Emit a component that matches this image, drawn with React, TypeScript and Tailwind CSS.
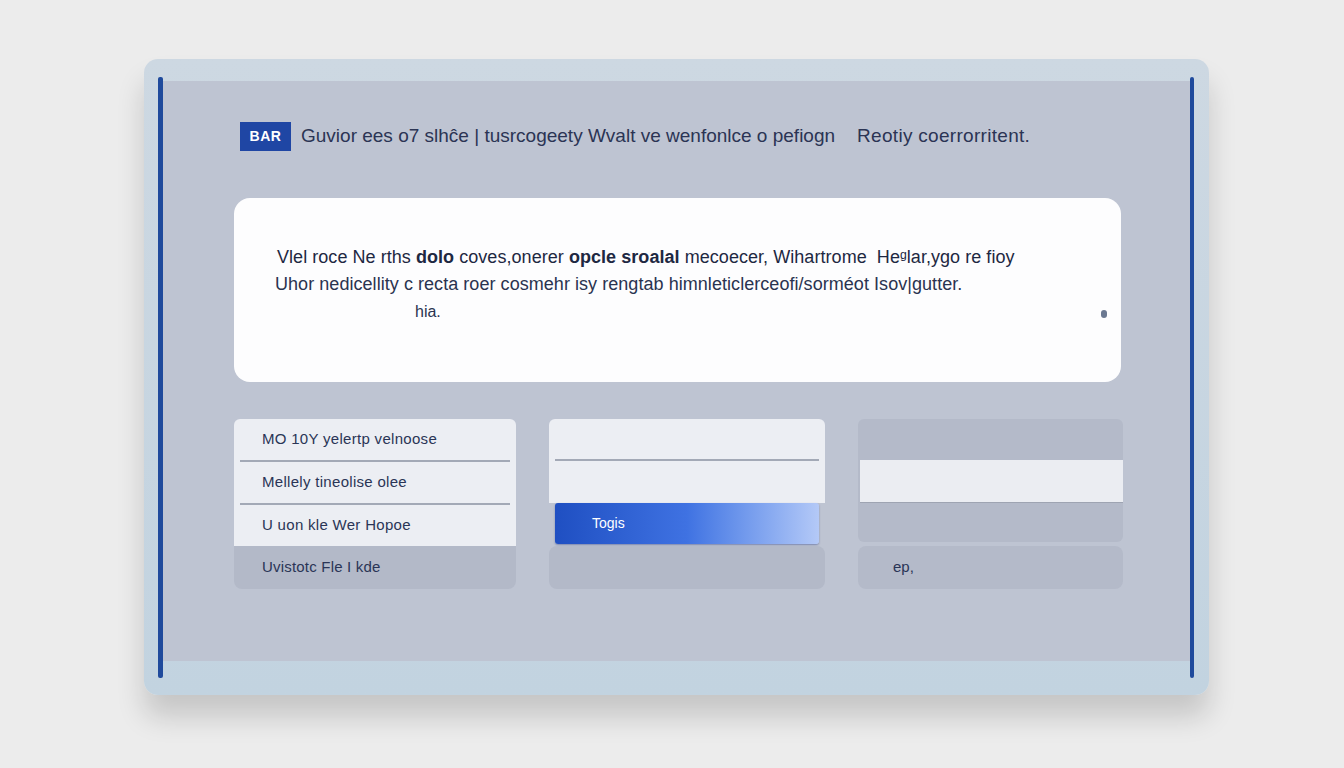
import React from "react";

const font = { fontFamily: '"Liberation Sans", Arial, sans-serif' };

function ListCard() {
  const rows = [
    "MO 10Y yelertp velnoose",
    "Mellely tineolise olee",
    "U uon kle Wer Hopoe",
  ];
  return (
    <div className="flex flex-col w-[282px]">
      <div className="flex flex-col bg-[#eceef3] rounded-t-[6px]">
        {rows.map((r, i) => (
          <div key={r} className="flex flex-col">
            {i > 0 && <div className="mx-[6px] h-[2px] bg-[#a3a9b6]" />}
            <div className="h-[41px] flex items-center pl-[28px] text-[15px] tracking-[0.3px] text-[#2a3556]">
              {r}
            </div>
          </div>
        ))}
      </div>
      <div className="h-[43px] flex items-center pl-[28px] text-[15px] tracking-[0.2px] text-[#2a3556] bg-[#b3b9c8] rounded-b-[8px]">
        Uvistotc Fle I kde
      </div>
    </div>
  );
}

function ButtonCard() {
  return (
    <div className="flex flex-col w-[276px]">
      <div className="flex flex-col bg-[#eceef3] rounded-t-[6px] h-[84px]">
        <div className="h-[40px]" />
        <div className="mx-[6px] h-[2px] bg-[#a3a9b6]" />
      </div>
      <div className="mx-[6px] h-[41px] rounded-[3px] bg-gradient-to-r from-[#1f4fc2] via-[#3f72e2] to-[#b4c9f7] flex items-center pl-[37px] text-[14px] text-white shadow-[0_1px_2px_rgba(20,40,120,0.4)]">
        Togis
      </div>
      <div className="mt-[2px] h-[43px] bg-[#b3b9c8] rounded-[8px]" />
    </div>
  );
}

function BlockCard() {
  return (
    <div className="flex flex-col w-[265px]">
      <div className="flex flex-col bg-[#b4bac9] rounded-[6px] h-[123px]">
        <div className="h-[41px]" />
        <div className="ml-[2px] h-[43px] bg-[#ebedf2] border-b border-[#9ea4b2]" />
      </div>
      <div className="mt-[4px] h-[43px] flex items-center pl-[35px] text-[15px] text-[#2a3556] bg-[#b4bac9] rounded-[8px]">
        ep,
      </div>
    </div>
  );
}

export default function App() {
  return (
    <div className="w-[1344px] h-[768px] bg-[#ececec] pt-[59px] pl-[144px] overflow-hidden" style={font}>
      <div className="w-[1065px] h-[636px] rounded-[14px] bg-gradient-to-b from-[#cdd8e2] to-[#c2d3e0] flex pl-[14px] pt-[18px] shadow-[0_22px_28px_rgba(0,0,0,0.16)]">
        <div className="w-[5px] h-[601px] bg-[#1f4a9c] rounded-[2px]" />
        <div className="mt-[4px] w-[1027px] h-[580px] bg-[#bec4d2] flex flex-col pt-[41px]">
          <div className="flex items-center pl-[77px] h-[29px]">
            <div className="w-[51px] h-[29px] bg-[#1f46a4] flex items-center justify-center text-white font-bold text-[14px] tracking-[0.5px]">
              BAR
            </div>
            <div className="ml-[10px] text-[19px] text-[#2b3454] tracking-[0px] whitespace-nowrap">
              Guvior ees o7 slhĉe | tusrcogeety Wvalt ve wenfonlce o pefiogn
            </div>
            <div className="ml-[22px] text-[19px] text-[#2b3454] tracking-[0.3px] whitespace-nowrap">
              Reotiy coerrorritent.
            </div>
          </div>
          <div className="mt-[47px] ml-[71px] w-[887px] h-[184px] bg-[#fdfdfe] rounded-[16px] flex pl-[43px] pt-[46px] text-[#1e2842] text-[18px] leading-[27px]">
            <div className="flex flex-col flex-1">
              <div className="tracking-[0.05px] whitespace-nowrap">
                Vlel roce Ne rths <span className="font-semibold">dolo</span> coves,onerer{" "}
                <span className="font-semibold">opcle sroalal</span> mecoecer, Wihartrome&nbsp; Heᵍlar,ygo re fioy
              </div>
              <div className="-ml-[2px] tracking-[0.05px] whitespace-nowrap text-[#2a3350]">
                Uhor nedicellity c recta roer cosmehr isy rengtab himnleticlerceofi/sorméot Isov|gutter.
              </div>
              <div className="pl-[138px] text-[16px] text-[#2a3350]">hia.</div>
            </div>
            <div className="self-start mt-[66px] mr-[14px] w-[6px] h-[8px] rounded-full bg-[#6b7891]" />
          </div>
          <div className="mt-[37px] ml-[71px] flex gap-[33px]">
            <ListCard />
            <ButtonCard />
            <BlockCard />
          </div>
        </div>
        <div className="w-[4px] h-[601px] bg-[#1f4a9c] rounded-[2px]" />
      </div>
    </div>
  );
}
